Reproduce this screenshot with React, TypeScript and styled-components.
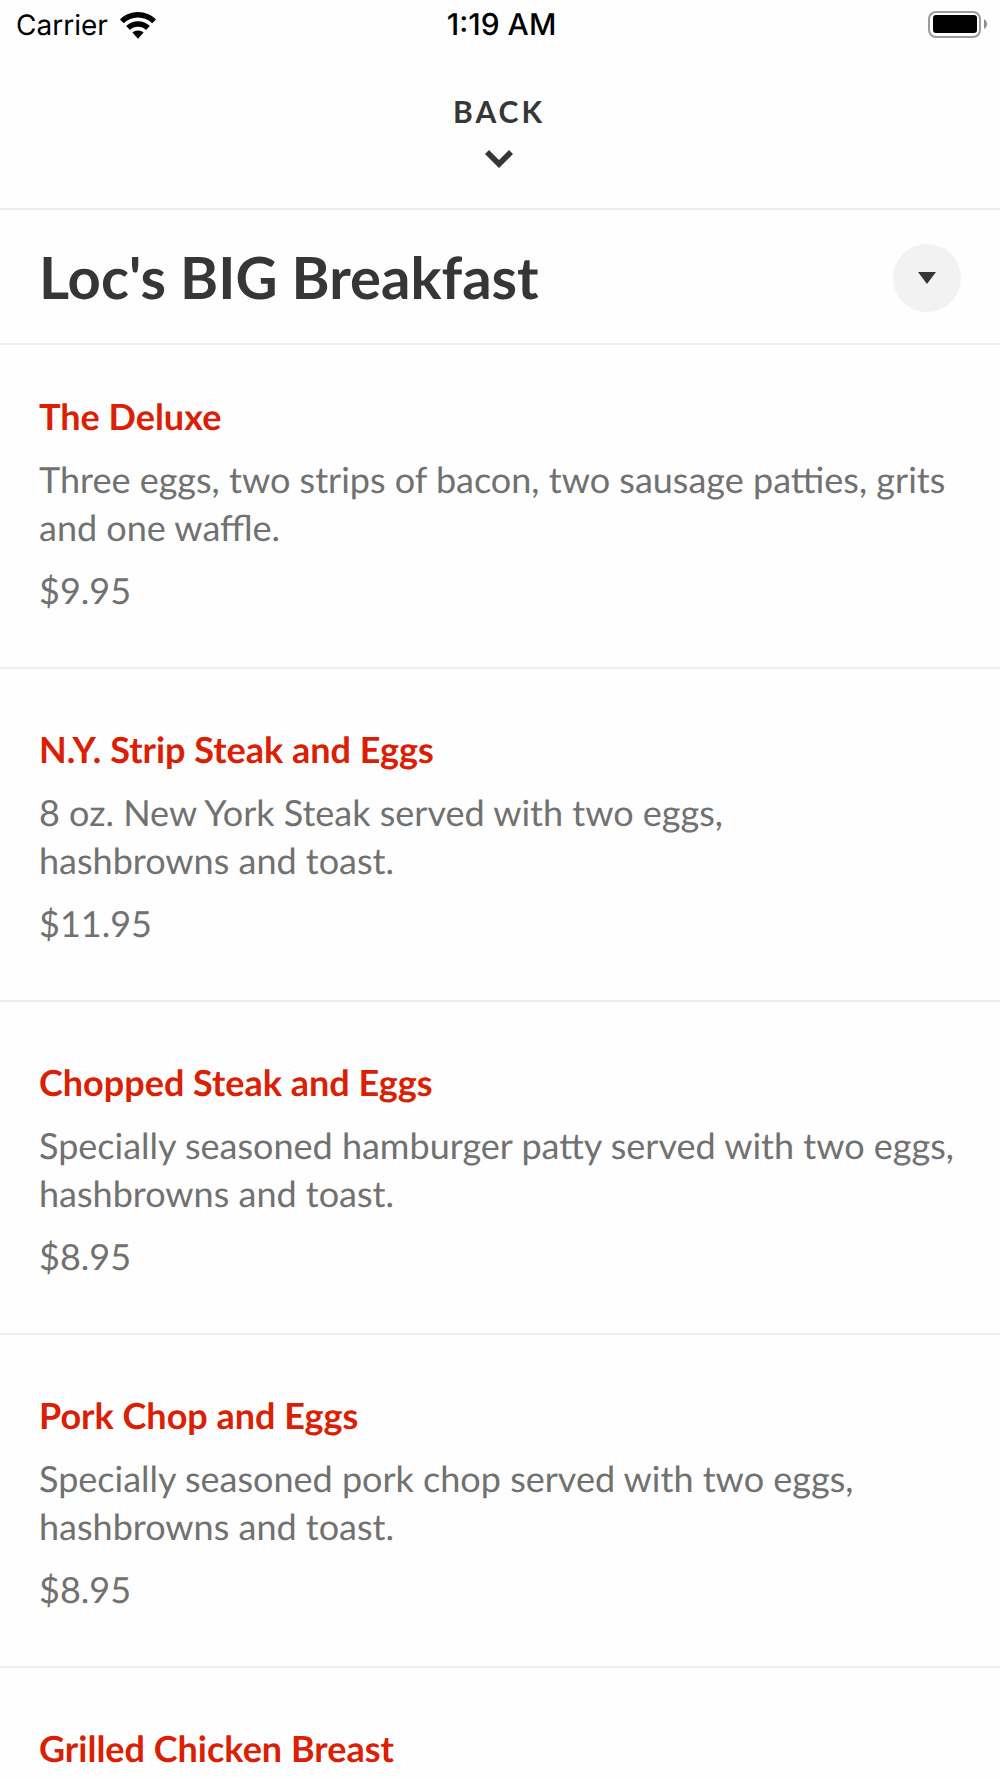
import React from "react";
import styled, { createGlobalStyle } from "styled-components";

const GlobalStyle = createGlobalStyle`
  * { box-sizing: border-box; }
  body {
    margin: 0;
    background: #fefefe;
    font-family: Lato, "Open Sans", sans-serif;
    color: #363636;
    text-rendering: geometricPrecision;
  }
  h1, h2, p, ul { margin: 0; padding: 0; }
`;

const Screen = styled.div`
  display: flex;
  flex-direction: column;
  height: 100vh;
  overflow: hidden;
`;

const StatusBar = styled.div`
  display: grid;
  grid-template-columns: 1fr auto 1fr;
  align-items: center;
  height: 50px;
  flex: none;
  padding: 0 13px 0 16px;
  font-family: Inter, Roboto, sans-serif;
  font-size: 28px;
  line-height: 34px;
  color: #000;
`;

const Carrier = styled.div`
  display: flex;
  align-items: center;
  gap: 12px;
`;

const Clock = styled.time`
  font-size: 30px;
  font-weight: 500;
`;

const Battery = styled.svg`
  justify-self: end;
`;

const BackBar = styled.header`
  display: flex;
  flex: none;
  justify-content: center;
  height: 160px;
  border-bottom: 2px solid #eeeeee;
`;

const BackButton = styled.button`
  display: flex;
  flex-direction: column;
  align-items: center;
  gap: 21px;
  padding: 43px 26px 0 24px;
  border: 0;
  background: none;
  font: 700 30px/36px Lato, sans-serif;
  letter-spacing: 3px;
  color: #363636;
  cursor: pointer;
`;

const TitleBar = styled.div`
  display: flex;
  flex: none;
  align-items: center;
  justify-content: space-between;
  height: 135px;
  padding: 3px 39px 0;
  border-bottom: 2px solid #eeeeee;
`;

const Title = styled.h1`
  font-size: 58px;
  line-height: 70px;
  font-weight: 700;
`;

const ToggleButton = styled.button`
  display: flex;
  align-items: center;
  justify-content: center;
  width: 68px;
  height: 68px;
  padding: 0;
  border: 0;
  border-radius: 50%;
  background: #f2f2f2;
  cursor: pointer;
`;

const Menu = styled.ul`
  list-style: none;
`;

const Item = styled.li`
  display: flex;
  flex-direction: column;
  gap: 15px;
  padding: 56px 39px 53px;
  border-bottom: 2px solid #eeeeee;
  font-size: 36px;
  line-height: 48px;

  &:first-child {
    padding-top: 47px;
  }
`;

const ItemName = styled.h2`
  font-size: inherit;
  font-weight: 700;
  color: #da1f05;
`;

const ItemText = styled.p`
  color: #717171;
  white-space: pre-line;
`;

const dishes = [
  {
    name: "The Deluxe",
    text: "Three eggs, two strips of bacon, two sausage patties, grits and one waffle.",
    price: "$9.95",
  },
  {
    name: "N.Y. Strip Steak and Eggs",
    text: "8 oz. New York Steak served with two eggs,\nhashbrowns and toast.",
    price: "$11.95",
  },
  {
    name: "Chopped Steak and Eggs",
    text: "Specially seasoned hamburger patty served with two eggs, hashbrowns and toast.",
    price: "$8.95",
  },
  {
    name: "Pork Chop and Eggs",
    text: "Specially seasoned pork chop served with two eggs, hashbrowns and toast.",
    price: "$8.95",
  },
  { name: "Grilled Chicken Breast" },
];

export default function App() {
  return (
    <Screen>
      <GlobalStyle />
      <StatusBar>
        <Carrier>
          <span>Carrier</span>
          <svg width="36" height="27" viewBox="0 0 36 27" aria-hidden="true">
            <path d="M18 0C25 0 31.400 2.900 36 7.400L32.200 11.300C28.400 7.700 23.500 5.500 18 5.500S7.600 7.700 3.800 11.300L0 7.400C4.600 2.900 11 0 18 0Z" />
            <path d="M18 9.200C22.600 9.200 26.700 11 29.800 14L26 17.900C23.900 15.900 21.100 14.700 18 14.700S12.100 15.900 10 17.900L6.200 14C9.300 11 13.400 9.200 18 9.200Z" />
            <path d="M18 18.400C20.200 18.400 22.100 19.200 23.600 20.600L18 26.700L12.400 20.600C13.900 19.200 15.800 18.400 18 18.400Z" />
          </svg>
        </Carrier>
        <Clock>1:19 AM</Clock>
        <Battery width="59" height="28" viewBox="0 0 59 28" aria-hidden="true">
          <rect x="1" y="1" width="51" height="25" rx="7" fill="#fff" stroke="#9b9b9b" strokeWidth="2" />
          <rect x="5" y="4" width="44" height="18" rx="3" />
          <path d="M56 8C60 10 60 16 56 18Z" fill="#8c8c8c" />
        </Battery>
      </StatusBar>
      <BackBar>
        <BackButton type="button">
          BACK
          <svg width="28" height="18" viewBox="0 0 28 18" aria-hidden="true">
            <path d="M4 0L14 10L24 0L28 4L14 18L0 4Z" fill="#363636" />
          </svg>
        </BackButton>
      </BackBar>
      <TitleBar>
        <Title>Loc's BIG Breakfast</Title>
        <ToggleButton type="button" aria-label="Choose menu section">
          <svg width="18" height="12" viewBox="0 0 18 12" aria-hidden="true">
            <path d="M0 0H18L9 12Z" fill="#363636" />
          </svg>
        </ToggleButton>
      </TitleBar>
      <Menu>
        {dishes.map((dish) => (
          <Item key={dish.name}>
            <ItemName>{dish.name}</ItemName>
            {dish.text && <ItemText>{dish.text}</ItemText>}
            {dish.price && <ItemText>{dish.price}</ItemText>}
          </Item>
        ))}
      </Menu>
    </Screen>
  );
}
